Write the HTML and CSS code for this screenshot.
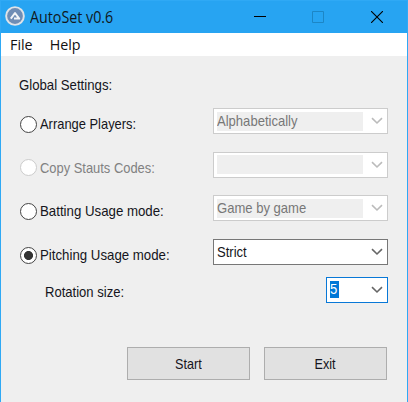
FILE: index.html
```html
<!DOCTYPE html>
<html lang="en">
<head>
<meta charset="utf-8">
<title>AutoSet v0.6</title>
<link rel="stylesheet" href="styles.css">
</head>
<body>
<div class="window">
  <header class="titlebar">
    <svg class="logo" width="20" height="20" viewBox="0 0 20 20"><circle cx="10" cy="10" r="9.8" fill="#dfe3e8"/><circle cx="10" cy="10" r="7.9" fill="#6f8db5"/><path d="M5.8 12.6 10 7 14.2 12.6H9" fill="none" stroke="#f2f4f7" stroke-width="2" stroke-linejoin="round"/></svg>
    <h1 class="title">AutoSet v0.6</h1>
    <div class="controls">
      <svg width="12" height="12" viewBox="0 0 12 12"><path d="M0 5.5h12" stroke="#000"/></svg>
      <svg width="12" height="12" viewBox="0 0 12 12"><path d="M.5.5h11v11H.5z" fill="none" stroke="#1c86c6"/></svg>
      <svg width="12" height="12" viewBox="0 0 12 12"><path d="m0 0 12 12M12 0 0 12" stroke="#000" stroke-width="1.1"/></svg>
    </div>
  </header>
  <nav class="menu"><span>File</span><span>Help</span></nav>
  <main class="content">
    <h2 class="heading"><span class="t w-global">Global Settings:</span></h2>
    <div class="rows">
      <div class="row"><i class="radio"></i><span class="t label w-arrange">Arrange Players:</span>
        <div class="combo disabled"><div class="field"><span class="t">Alphabetically</span></div><svg class="arrow" width="12" height="8" viewBox="0 0 12 8"><path d="m1 1.2 5 4.8 5-4.8"/></svg></div></div>
      <div class="row off"><i class="radio"></i><span class="t label w-arrange">Copy Stauts Codes:</span>
        <div class="combo disabled"><div class="field"></div><svg class="arrow" width="12" height="8" viewBox="0 0 12 8"><path d="m1 1.2 5 4.8 5-4.8"/></svg></div></div>
      <div class="row"><i class="radio"></i><span class="t label w-mode">Batting Usage mode:</span>
        <div class="combo disabled"><div class="field"><span class="t">Game by game</span></div><svg class="arrow" width="12" height="8" viewBox="0 0 12 8"><path d="m1 1.2 5 4.8 5-4.8"/></svg></div></div>
      <div class="row"><i class="radio checked"></i><span class="t label w-mode">Pitching Usage mode:</span>
        <div class="combo"><div class="field"><span class="t">Strict</span></div><svg class="arrow" width="12" height="8" viewBox="0 0 12 8"><path d="m1 1.2 5 4.8 5-4.8"/></svg></div></div>
    </div>
    <div class="row rotation"><span class="t label">Rotation size:</span>
      <div class="combo small"><div class="field"><span class="selected"><span class="t">5</span></span></div><svg class="arrow" width="12" height="8" viewBox="0 0 12 8"><path d="m1 1.2 5 4.8 5-4.8"/></svg></div></div>
    <div class="buttons"><button><span class="t">Start</span></button><button><span class="t">Exit</span></button></div>
  </main>
</div>
</body>
</html>
```
FILE: styles.css
```css
* { box-sizing: border-box; }
body { margin: 0; font: 14.5px/18px "Liberation Sans", Arial, sans-serif; color: #151520; }
.window { width: 408px; height: 402px; background: #efefef; border: solid #2fa9f5; border-width: 1px 1px 0; overflow: hidden; }
.titlebar { height: 32px; background: #27a4f2; display: flex; align-items: center; padding: 0 24px 0 4px; }
.logo { margin-top: -2px; }
.title { margin: 0 0 0 5px; font: 15.6px/20px "Open Sans", sans-serif; color: #101820; transform: scaleX(.915); transform-origin: left; white-space: nowrap; }
.controls { margin-left: auto; display: flex; gap: 46px; }
.controls svg:last-child { margin-left: 1px; }
.menu { height: 23px; background: #fff; display: flex; gap: 17px; padding-left: 9px; font: 14.3px/23px "Open Sans", sans-serif; color: #111; }
.content { padding: 20px 19px 0 18px; }
.t { display: inline-block; white-space: nowrap; transform: scaleX(.9); transform-origin: left; }
.w-global { transform: scaleX(.91); }
.w-arrange { transform: scaleX(.89); }
.w-mode { transform: scaleX(.914); }
.heading { margin: 0; height: 32px; font: inherit; }
.rows { display: grid; gap: 17.7px; }
.row { display: flex; align-items: center; height: 26px; }
.radio { flex: none; width: 17px; height: 17px; border: 1.4px solid #444; border-radius: 50%; background: #fff; margin: 6px 3.5px 0 .5px; }
.radio.checked { background: radial-gradient(circle, #333 0 4.1px, #fff 4.9px); }
.label { margin-top: 6px; }
.off { color: #818181; }
.off .radio { border-color: #ccc; }
.combo { margin-left: auto; flex: none; width: 175px; height: 26px; padding: 3px; background: #fff; border: 1px solid #777; display: flex; align-items: center; }
.field { width: 146px; height: 19px; line-height: 18px; }
.disabled { border-color: #ccc; color: #777; }
.disabled .field { background: #efefef; }
.arrow { margin-left: 8px; fill: none; stroke: #666; stroke-width: 1.6; }
.disabled .arrow { stroke: #bbb; }
.rotation { margin-top: 12px; padding-left: 26px; }
.rotation .label { margin-top: 3px; }
.small { width: 62px; border-color: #0878d7; }
.small .field { width: 33px; }
.selected { display: block; width: 9px; height: 17px; line-height: 17px; background: #0078d7; color: #fff; }
.buttons { display: flex; justify-content: flex-end; gap: 14px; margin: 44px 1px 0 0; }
button { width: 123px; height: 33px; padding: 0; border: 1px solid #adadad; background: #e1e1e1; font: inherit; color: inherit; }
button .t { transform: scaleX(.87); transform-origin: center; }
```
